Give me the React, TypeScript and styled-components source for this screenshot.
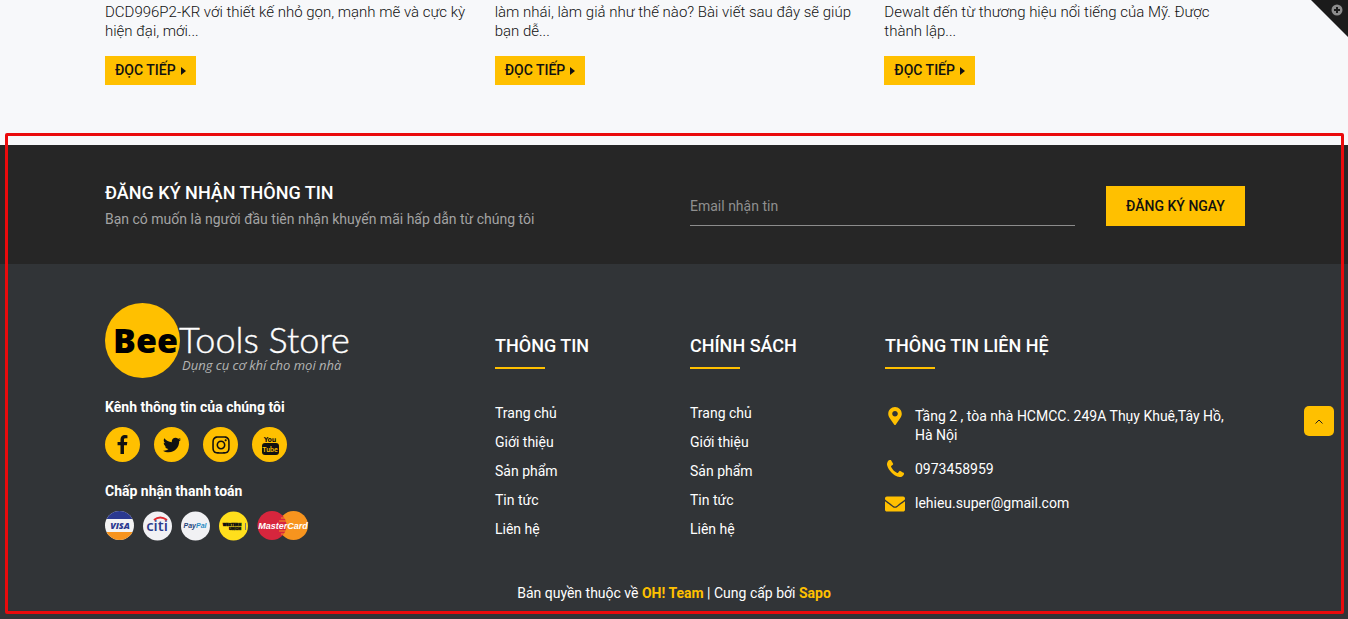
import React from "react";
import styled, { createGlobalStyle } from "styled-components";
import { FaTwitter, FaInstagram, FaMapMarkerAlt, FaEnvelope } from "react-icons/fa";

const yellow = "#ffc000";

const GlobalStyle = createGlobalStyle`
  *, *::before, *::after { box-sizing: border-box; }
  body {
    margin: 0;
    background: #313437;
    color: #fff;
    font: 400 14px/19px Roboto, "Noto Sans", sans-serif;
    overflow-x: hidden;
  }
  h2, h3, h4, p, ul { margin: 0; padding: 0; }
  a { color: inherit; text-decoration: none; }
`;

const Page = styled.div`
  position: relative;
`;

const Container = styled.div`
  width: 100%;
  max-width: 1170px;
  margin: 0 auto;
  padding: 0 14px 0 16px;
`;

const News = styled.section`
  background: #f7f8fa;
  color: #111;
  overflow: hidden;
`;

const Articles = styled(Container)`
  display: grid;
  grid-template-columns: repeat(3, minmax(0, 1fr));
  column-gap: 15px;
  padding-top: 3px;
  padding-right: 0;
  padding-bottom: 60px;
`;

const Article = styled.article`
  display: flex;
  flex-direction: column;
  align-items: flex-start;
  gap: 15px;
`;

const Excerpt = styled.p`
  font-size: 15px;
  font-weight: 300;
`;

const ReadMore = styled.a`
  display: flex;
  align-items: center;
  gap: 5px;
  height: 29px;
  padding: 0 10px;
  background: ${yellow};
  color: #111;
  font-weight: 500;
`;

const Newsletter = styled.section`
  background: #262626;
`;

const NewsletterRow = styled(Container)`
  display: grid;
  grid-template-columns: minmax(0, 585fr) minmax(0, 555fr);
  align-items: center;
  padding-top: 35px;
  padding-bottom: 32px;
`;

const Heading = styled.h2`
  font-size: 18px;
  font-weight: 500;
  line-height: 26px;
`;

const Lead = styled.p`
  color: #a3a3a3;
  line-height: 26px;
`;

const SignUp = styled.form`
  display: flex;
  gap: 31px;
`;

const EmailInput = styled.input`
  flex: 1;
  min-width: 0;
  height: 40px;
  padding: 0;
  border: 0;
  border-bottom: 1px solid #8c8c8c;
  background: transparent;
  color: #fff;
  font: inherit;
  &::placeholder { color: #8f8f8f; opacity: 1; }
`;

const SubmitButton = styled.button`
  width: 139px;
  height: 40px;
  padding: 0;
  border: 0;
  background: ${yellow};
  color: #111;
  font: inherit;
  font-weight: 500;
`;

const FooterGrid = styled(Container)`
  display: grid;
  grid-template-columns: minmax(0, 390fr) minmax(0, 195fr) minmax(0, 195fr) minmax(0, 360fr);
  padding-top: 39px;
`;

const Brand = styled.div`
  display: flex;
  flex-direction: column;
  align-items: flex-start;
`;

const Logo = styled.svg`
  display: block;
  width: 250px;
  height: 76px;
`;

const SmallTitle = styled.h4`
  margin-top: 18px;
  font-size: 14px;
  font-weight: 700;
  line-height: 20px;
`;

const SocialRow = styled.div`
  display: flex;
  gap: 14px;
  margin: 10px 0 1px;
`;

const SocialLink = styled.a`
  display: flex;
  align-items: center;
  justify-content: center;
  width: 35px;
  height: 35px;
  border-radius: 50%;
  background: ${yellow};
  color: #111;
`;

const PaymentRow = styled.div`
  display: flex;
  gap: 8px;
  margin-top: 10px;
`;

const Column = styled.div`
  padding-top: 30px;
`;

const ColumnTitle = styled.h3`
  font-size: 18px;
  font-weight: 500;
  line-height: 26px;
  &::after {
    content: "";
    display: block;
    width: 50px;
    height: 2px;
    margin-top: 8px;
    background: ${yellow};
  }
`;

const LinkList = styled.ul`
  margin-top: 30px;
  list-style: none;
  line-height: 29px;
`;

const ContactList = styled.ul`
  display: flex;
  flex-direction: column;
  gap: 15px;
  margin-top: 38px;
  padding-right: 16px;
  list-style: none;
`;

const ContactItem = styled.li`
  display: grid;
  grid-template-columns: 20px minmax(0, 1fr);
  gap: 10px;
  svg { justify-self: center; color: ${yellow}; }
`;

const Copyright = styled.p`
  padding: 40px 15px 16px;
  text-align: center;
  a { color: ${yellow}; font-weight: 700; }
`;

const Frame = styled.div`
  position: absolute;
  inset: 133px 4px 5px 5px;
  border: 3px solid #ea0a0c;
  border-radius: 2px;
  pointer-events: none;
`;

const CornerButton = styled.button`
  position: absolute;
  top: 0;
  right: 0;
  width: 37px;
  height: 37px;
  padding: 0;
  border: 0;
  background: none;
  svg { display: block; }
`;

const BackToTop = styled.a`
  position: absolute;
  top: 406px;
  right: 14px;
  display: flex;
  align-items: center;
  justify-content: center;
  width: 30px;
  height: 30px;
  border-radius: 5px;
  background: ${yellow};
`;

const articles = [
  ["DCD996P2-KR với thiết kế nhỏ gọn, mạnh mẽ và cực kỳ", "hiện đại, mới..."],
  ["làm nhái, làm giả như thế nào? Bài viết sau đây sẽ giúp", "bạn dễ..."],
  ["Dewalt đến từ thương hiệu nổi tiếng của Mỹ. Được", "thành lập..."],
];

const links = ["Trang chủ", "Giới thiệu", "Sản phẩm", "Tin tức", "Liên hệ"];

function BrandLogo() {
  return (
    <Logo viewBox="0 0 250 76" role="img" aria-label="BeeTools Store">
      <circle cx="37.500" cy="37.500" r="37.500" fill={yellow} />
      <text x="8" y="50" fontFamily="Open Sans, sans-serif" fontWeight="800" fontSize="34" fill="#000">Bee</text>
      <text x="74" y="50" fontFamily="Lato, sans-serif" fontWeight="300" fontSize="36" fill="#fff" stroke="#fff" strokeWidth="0.400">Tools Store</text>
      <text x="77" y="67" fontFamily="Open Sans, sans-serif" fontStyle="italic" fontSize="13" fill="#b4b4b4">Dụng cụ cơ khí cho mọi nhà</text>
    </Logo>
  );
}

function FacebookIcon() {
  return (
    <svg width="11" height="19" viewBox="95 0 864 1664" fill="currentColor" aria-hidden="true">
      <path d="M959 12v264H802q-86 0-116 36t-30 108v189h293l-39 296H656v759H350V905H95V609h255V391q0-186 104-288.500T731 0q147 0 228 12z" />
    </svg>
  );
}

function PhoneIcon() {
  return (
    <svg width="17" height="17" viewBox="0 128 1408 1408" fill="currentColor" aria-hidden="true">
      <path d="M1408 1240q0 27-10 70.500t-21 68.500q-21 50-122 106-94 51-186 51-27 0-53-3.500t-57.500-12.500-47-14.500-55.500-20.500-49-18q-98-35-175-83-127-79-264-216t-216-264q-48-77-83-175-3-9-18-49t-20.500-55.500-14.500-47-12.500-57.500-3.500-53q0-92 51-186 56-101 106-122 25-11 68.500-21t70.500-10q14 0 21 3 18 6 53 76 11 19 30 54t35 63.500 31 53.500q3 4 17.500 25t21.500 35.500 7 28.500q0 20-28.500 50t-62 55-62 53-28.500 46q0 9 5 22.500t8.500 20.500 14 24 11.500 19q76 137 174 235t235 174q2 1 19 11.500t24 14 20.500 8.500 22.500 5q18 0 46-28.500t53-62 55-62 50-28.500q14 0 28.500 7t35.500 21.500 25 17.500q25 15 53.500 31t63.500 35 54 30q70 35 76 53 3 7 3 21z" />
    </svg>
  );
}

function YoutubeIcon() {
  return (
    <svg width="18" height="22" viewBox="0 0 18 22">
      <text x="9" y="8" textAnchor="middle" fontFamily="DejaVu Sans Condensed, Roboto, sans-serif" fontSize="7" fontWeight="700" fill="#111">You</text>
      <rect x="1" y="9" width="17" height="12" rx="3" fill="#111" />
      <text x="9" y="18" textAnchor="middle" fontFamily="Roboto, sans-serif" fontSize="7" fontWeight="500" fill={yellow}>Tube</text>
    </svg>
  );
}

function Visa() {
  return (
    <svg width="30" height="30" viewBox="0 0 30 30" role="img" aria-label="Visa">
      <clipPath id="visa"><circle cx="14.500" cy="14.500" r="14.500" /></clipPath>
      <g clipPath="url(#visa)">
        <rect width="30" height="30" fill="#f3f3f3" />
        <rect width="30" height="8" fill="#2b3990" />
        <rect y="21" width="30" height="9" fill="#f7941e" />
      </g>
      <text x="15" y="18" textAnchor="middle" fontFamily="Open Sans, sans-serif" fontStyle="italic" fontWeight="800" fontSize="9" fill="#2b3990">VISA</text>
    </svg>
  );
}

function Citi() {
  return (
    <svg width="30" height="30" viewBox="0 0 30 30" role="img" aria-label="Citi">
      <circle cx="14.500" cy="15" r="14.500" fill="#f1f1f4" />
      <text x="14" y="20" textAnchor="middle" fontFamily="Open Sans, sans-serif" fontWeight="600" fontSize="15" fill="#2a3a8c">citi</text>
      <path d="M11 9Q17 4 24 9" fill="none" stroke="#e0292f" strokeWidth="2" />
    </svg>
  );
}

function Paypal() {
  return (
    <svg width="30" height="30" viewBox="0 0 30 30" role="img" aria-label="PayPal">
      <circle cx="14.500" cy="15" r="14.500" fill="#f1f1f4" />
      <text x="14" y="17" textAnchor="middle" fontFamily="Liberation Sans, sans-serif" fontStyle="italic" fontWeight="700" fontSize="7" fill="#1f4378">Pay<tspan fill="#2a8cc4">Pal</tspan></text>
    </svg>
  );
}

function WesternUnion() {
  return (
    <svg width="30" height="30" viewBox="0 0 30 30" role="img" aria-label="Western Union">
      <circle cx="14.500" cy="15" r="14.500" fill="#ffdf1c" />
      <text x="13" y="15" textAnchor="middle" fontFamily="Roboto, sans-serif" fontWeight="900" fontSize="4" fill="#111" stroke="#111" strokeWidth="0.500">WESTERN</text>
      <text x="16" y="19" textAnchor="middle" fontFamily="Roboto, sans-serif" fontWeight="900" fontSize="4" fill="#111" stroke="#111" strokeWidth="0.500">UNION</text>
      <path d="M26.500 12v7" stroke="#777" strokeWidth="1" />
    </svg>
  );
}

function Mastercard() {
  return (
    <svg width="52" height="30" viewBox="0 0 52 30" role="img" aria-label="MasterCard">
      <circle cx="36.500" cy="14.500" r="14.500" fill="#f7941e" />
      <circle cx="15" cy="14.500" r="14.500" fill="#d7263d" />
      <path d="M24 7h6M22 10h8M22 20h8M24 23h6" stroke="#f7941e" strokeWidth="1" />
      <text x="26" y="18" textAnchor="middle" fontFamily="Liberation Sans, sans-serif" fontStyle="italic" fontWeight="700" fontSize="9" fill="#fff">MasterCard</text>
    </svg>
  );
}

function LinkColumn({ title }: { title: string }) {
  return (
    <Column>
      <ColumnTitle>{title}</ColumnTitle>
      <LinkList>
        {links.map((label) => (
          <li key={label}><a href="#">{label}</a></li>
        ))}
      </LinkList>
    </Column>
  );
}

export default function App() {
  return (
    <Page>
      <GlobalStyle />
      <News>
        <Articles>
          {articles.map(([first, second]) => (
            <Article key={first}>
              <Excerpt>{first}<br />{second}</Excerpt>
              <ReadMore href="#">
                ĐỌC TIẾP
                <svg width="5" height="8" viewBox="0 0 5 8" aria-hidden="true"><path d="M0 0L5 4L0 8Z" fill="#111" /></svg>
              </ReadMore>
            </Article>
          ))}
        </Articles>
      </News>
      <Newsletter>
        <NewsletterRow>
          <div>
            <Heading>ĐĂNG KÝ NHẬN THÔNG TIN</Heading>
            <Lead>Bạn có muốn là người đầu tiên nhận khuyến mãi hấp dẫn từ chúng tôi</Lead>
          </div>
          <SignUp>
            <EmailInput type="email" placeholder="Email nhận tin" aria-label="Email nhận tin" />
            <SubmitButton type="button">ĐĂNG KÝ NGAY</SubmitButton>
          </SignUp>
        </NewsletterRow>
      </Newsletter>
      <footer>
        <FooterGrid>
          <Brand>
            <BrandLogo />
            <SmallTitle>Kênh thông tin của chúng tôi</SmallTitle>
            <SocialRow>
              <SocialLink href="#" aria-label="Facebook"><FacebookIcon /></SocialLink>
              <SocialLink href="#" aria-label="Twitter"><FaTwitter size={18} /></SocialLink>
              <SocialLink href="#" aria-label="Instagram"><FaInstagram size={20} /></SocialLink>
              <SocialLink href="#" aria-label="YouTube"><YoutubeIcon /></SocialLink>
            </SocialRow>
            <SmallTitle>Chấp nhận thanh toán</SmallTitle>
            <PaymentRow>
              <Visa />
              <Citi />
              <Paypal />
              <WesternUnion />
              <Mastercard />
            </PaymentRow>
          </Brand>
          <LinkColumn title="THÔNG TIN" />
          <LinkColumn title="CHÍNH SÁCH" />
          <Column>
            <ColumnTitle>THÔNG TIN LIÊN HỆ</ColumnTitle>
            <ContactList>
              <ContactItem>
                <FaMapMarkerAlt size={18} />
                <span>Tầng 2 , tòa nhà HCMCC. 249A Thụy Khuê,Tây Hồ, Hà Nội</span>
              </ContactItem>
              <ContactItem>
                <PhoneIcon />
                <a href="tel:0973458959">0973458959</a>
              </ContactItem>
              <ContactItem>
                <FaEnvelope size={20} />
                <a href="mailto:lehieu.super@gmail.com">lehieu.super@gmail.com</a>
              </ContactItem>
            </ContactList>
          </Column>
        </FooterGrid>
        <Copyright>
          Bản quyền thuộc về <a href="#">OH! Team</a> | Cung cấp bởi <a href="#">Sapo</a>
        </Copyright>
      </footer>
      <BackToTop href="#" aria-label="Lên đầu trang">
        <svg width="8" height="5" viewBox="0 0 8 5"><path d="M0.500 4.500L4 1L7.500 4.500" fill="none" stroke="#222" /></svg>
      </BackToTop>
      <CornerButton type="button" aria-label="Mở rộng">
        <svg width="37" height="37" viewBox="0 0 37 37">
          <path d="M0 0H37V37Z" fill="#1b1b1b" />
          <circle cx="26" cy="10" r="5.500" fill="#8c8c8c" />
          <path d="M26 7v6M23 10h6" stroke="#1b1b1b" strokeWidth="2" />
        </svg>
      </CornerButton>
      <Frame />
    </Page>
  );
}
